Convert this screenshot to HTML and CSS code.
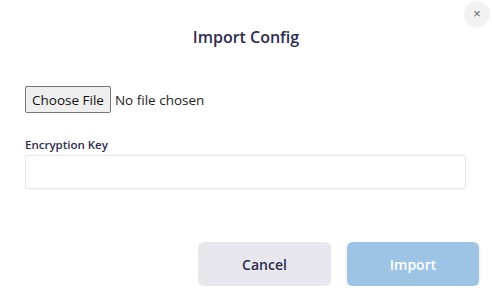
FILE: index.html
```html
<!DOCTYPE html>
<html lang="en">
<head>
  <meta charset="UTF-8" />
  <meta name="viewport" content="width=device-width, initial-scale=1" />
  <title>Import Config</title>
  <link rel="stylesheet" href="styles.css">
</head>
<body>
  <div class="dialog" role="dialog" aria-labelledby="dialogTitle">
    <button type="button" class="close-btn" aria-label="Close">&times;</button>
    <h1 id="dialogTitle" class="dialog-title">Import Config</h1>

    <div class="dialog-body">
      <input type="file" id="configFile" class="file-input" />

      <label for="encryptionKey" class="field-label">Encryption Key</label>
      <input type="text" id="encryptionKey" class="text-input" autocomplete="off" />
    </div>

    <div class="dialog-footer">
      <button type="button" class="btn btn-cancel">Cancel</button>
      <button type="button" class="btn btn-import" disabled>Import</button>
    </div>
  </div>
</body>
</html>
```

FILE: styles.css
```css
*, *::before, *::after {
  box-sizing: border-box;
}
html {
  font-family: 'Open Sans', 'Noto Sans', 'Liberation Sans', sans-serif;
  font-size: 14px;
  background: #fff;
  color: #2d2c4f;
}
body {
  margin: 0;
  background: #fff;
}

.dialog {
  position: relative;
  padding-top: 27px;
}

.close-btn {
  position: absolute;
  top: 1px;
  right: 2px;
  width: 26px;
  height: 26px;
  border: none;
  border-radius: 50%;
  background: #f2f2f3;
  color: #666;
  font-family: 'Liberation Sans', sans-serif;
  font-size: 13px;
  line-height: 26px;
  padding: 0;
  cursor: pointer;
}

.dialog-title {
  margin: 0;
  font-size: 16px;
  line-height: 21px;
  font-weight: 600;
  text-align: center;
  color: #2d2c4f;
}

/* BODY */
.dialog-body {
  display: flex;
  flex-direction: column;
  align-items: flex-start;
  padding: 38px 26px 0 25px;
}

.file-input {
  font-family: 'Open Sans', 'Noto Sans', sans-serif;
  font-size: 13.5px;
  color: #222;
  height: 27px;
}
.file-input::file-selector-button {
  font: inherit;
  color: #111;
  height: 27px;
  padding: 0 6px;
  margin-right: 4px;
  background: #efefef;
  border: 1px solid #767676;
  border-radius: 2px;
}

.field-label {
  margin-top: 24px;
  margin-bottom: 2px;
  font-size: 11.5px;
  line-height: 16px;
  font-weight: 600;
  color: #2d2c4f;
}

.text-input {
  width: 100%;
  height: 34px;
  border: 1px solid #e6e6e8;
  border-radius: 2px;
  padding: 0 10px;
  font-family: inherit;
  font-size: 13px;
  outline: none;
}

/* FOOTER */
.dialog-footer {
  display: flex;
  justify-content: flex-end;
  gap: 16px;
  padding: 53px 13px 0 0;
}

.btn {
  width: 133px;
  height: 44px;
  border: none;
  border-radius: 6px;
  font-family: inherit;
  font-size: 14px;
  font-weight: 600;
  cursor: pointer;
}
.btn-cancel {
  background: #e8e7ed;
  color: #2d2c4f;
}
.btn-import {
  width: 132px;
  background: #9dc4e4;
  color: #fff;
  box-shadow: 0 1px 3px rgba(0, 0, 0, 0.15);
}
```
